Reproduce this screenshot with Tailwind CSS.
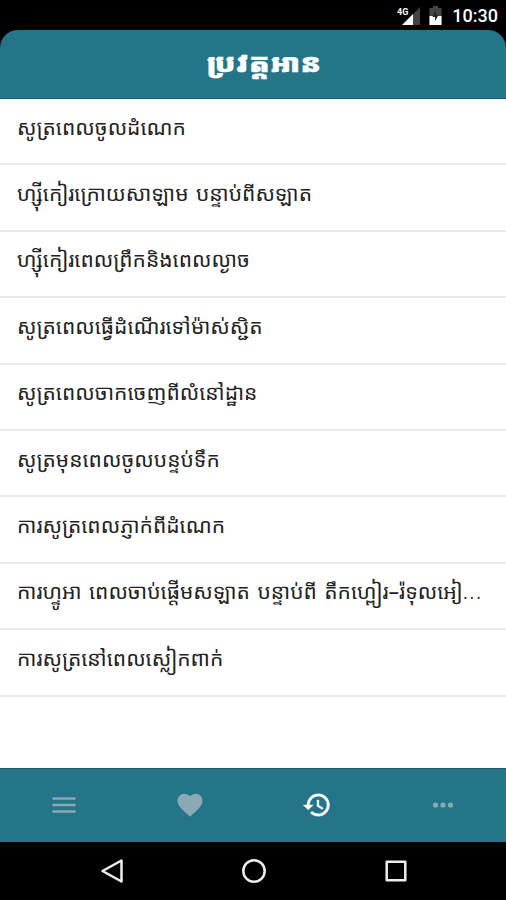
<!DOCTYPE html>
<html lang="km">
<head>
    <meta charset="UTF-8">
    <meta name="viewport" content="width=device-width, initial-scale=1.0">
    <title>ប្រវត្តអាន</title>
    <script src="https://cdn.jsdelivr.net/npm/@tailwindcss/browser@4"></script>
</head>
<body class="bg-black font-['Noto_Sans_Khmer','Khmer_OS','Noto_Sans',sans-serif]">
    <div class="w-[506px] h-[900px] flex flex-col overflow-hidden">
        <!-- Status bar -->
        <div class="h-[30px] shrink-0 flex items-center justify-end pr-2 text-white">
            <svg class="w-6 h-5 mr-2" viewBox="0 0 24 20">
                <path d="M23 2v18H6z" fill="#444"/>
                <path d="M16 9v11H5z" fill="#fff"/>
                <text x="0" y="9.500" font-size="9" font-weight="700" font-family="Roboto" fill="#fff" stroke="#000" stroke-width="1" paint-order="stroke">4G</text>
            </svg>
            <svg class="w-[13px] h-5 mr-2.5" viewBox="0 0 13 20">
                <path d="M4 1h5v2h3.500v17H.5V3H4z" fill="#444"/>
                <path d="M.5 11h12v9H.5z" fill="#fff"/>
                <path d="M6.800 5 3.500 12h2.500v4l3.500-6H6.800z" fill="#222"/>
            </svg>
            <span class="font-[Roboto] font-medium text-[18px] leading-none pt-0.5">10:30</span>
        </div>

        <!-- Header -->
        <header class="h-[69px] shrink-0 bg-[#25758a] rounded-t-[18px] border-b border-[#185d70] flex items-center justify-center pl-[22px] pb-1">
            <h1 class="text-white font-black text-[25px] leading-none whitespace-nowrap scale-x-[1.19] [-webkit-text-stroke:0.4px_white]">ប្រវត្តអាន</h1>
        </header>

        <!-- Reading history -->
        <ul id="history" class="flex-1 bg-white text-[#222]"></ul>

        <!-- Tabs -->
        <nav class="h-[74px] shrink-0 bg-[#25758a] border-t border-[#185d70] grid grid-cols-4 items-center justify-items-center pb-0.5 pl-px text-[#8ba8b5]">
            <svg class="w-6 h-6" viewBox="0 0 24 24" fill="none" stroke="currentColor" stroke-width="2.500"><path d="M.5 5.500h23M.5 12h23M.5 18.500h23"/></svg>
            <svg class="w-[30px] h-[30px]" viewBox="0 0 24 24" fill="currentColor"><path d="M12 21.350l-1.450-1.320C5.400 15.360 2 12.280 2 8.500 2 5.420 4.420 3 7.500 3c1.740 0 3.410.810 4.500 2.090C13.090 3.810 14.760 3 16.500 3 19.580 3 22 5.420 22 8.500c0 3.780-3.400 6.860-8.550 11.540L12 21.350z"/></svg>
            <svg class="w-[30px] h-[30px] text-white" viewBox="0 0 24 24" fill="currentColor" stroke="currentColor" stroke-width=".3"><path d="M13 3a9 9 0 0 0-9 9H1l3.890 3.890.070.140L9 12H6a7 7 0 1 1 2.060 4.940l-1.420 1.420A9 9 0 1 0 13 3zm-1 5v5l4.280 2.540.720-1.210-3.500-2.080V8H12z"/></svg>
            <svg class="w-6 h-6" viewBox="0 0 24 24" fill="currentColor"><circle cx="4.500" cy="12" r="2.600"/><circle cx="12" cy="12" r="2.600"/><circle cx="19.500" cy="12" r="2.600"/></svg>
        </nav>

        <!-- System navigation -->
        <div class="h-[58px] shrink-0 flex items-center justify-center gap-[118px] pl-0.5 text-[#eee]">
            <svg class="w-6 h-6" viewBox="0 0 24 24" fill="none" stroke="currentColor" stroke-width="2.500" stroke-linejoin="round"><path d="M21.500 1.500v21L2.500 12z"/></svg>
            <svg class="w-6 h-6" viewBox="0 0 24 24" fill="none" stroke="currentColor" stroke-width="2.500"><circle cx="12" cy="12" r="10.700"/></svg>
            <svg class="w-6 h-6" viewBox="0 0 24 24" fill="none" stroke="currentColor" stroke-width="2.500" stroke-linejoin="round"><path d="M2.700 2.700h18.600v18.600H2.700z"/></svg>
        </div>
    </div>

    <script>
        const items = [
            'សូត្រពេលចូលដំណេក',
            'ហ្ស៊ីកៀរក្រោយសាឡាម បន្ទាប់ពីសឡាត',
            'ហ្ស៊ីកៀរពេលព្រឹកនិងពេលល្ងាច',
            'សូត្រពេលធ្វើដំណើរទៅម៉ាស់ស្ជិត',
            'សូត្រពេលចាកចេញពីលំនៅដ្ឋាន',
            'សូត្រមុនពេលចូលបន្ទប់ទឹក',
            'ការសូត្រពេលភ្ញាក់ពីដំណេក',
            'ការហ្ទូអា ពេលចាប់ផ្តើមសឡាត បន្ទាប់ពី តឹកហ្ពៀរ–រ៉ទុលអៀ<span class="font-light tracking-[1.5px]">...</span>',
            'ការសូត្រនៅពេលស្លៀកពាក់'
        ];

        document.getElementById('history').innerHTML = items.map(text => `
            <li class="h-[66.4px] border-b-2 border-[#ebebeb] px-[17px] pb-2 flex items-center">
                <span class="text-[21px] leading-none whitespace-nowrap [word-spacing:2px]">${text}</span>
            </li>
        `).join('');
    </script>
</body>
</html>
